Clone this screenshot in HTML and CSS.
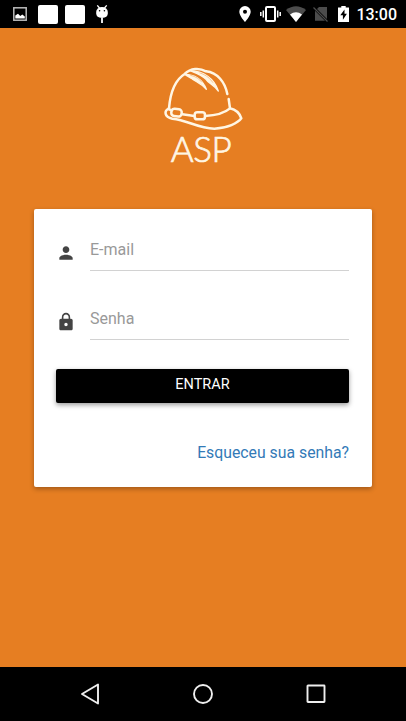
FILE: index.html
```html
<!DOCTYPE html>
<html lang="pt-BR">
<head>
<meta charset="utf-8">
<title>ASP</title>
<link rel="stylesheet" href="styles.css">
</head>

<body>
<div class="status">
   <div class="status_left">
      <svg class="ic_photo" width="14" height="14" viewBox="0 0 14 14"><rect x="0.8" y="0.8" width="12.4" height="12.4" fill="none" stroke="#bbb" stroke-width="1.5"/><path d="M2.3 11.5V8.5L5 6.8L7.3 9L9.3 7.5L11.8 9.6V11.5Z" fill="#fff"/></svg>
      <span class="blank"></span>
      <span class="blank"></span>
      <svg class="ic_droid" width="14" height="18" viewBox="0 0 14 18"><path d="M2.3 0.4L4.5 3M11.7 0.4L9.5 3" stroke="#fff" stroke-width="1.3"/><path d="M1.2 7A5.8 5 0 0 1 12.8 7V8.5Q12.8 12.6 7 13Q1.2 12.6 1.2 8.5Z" fill="#fff"/><path d="M7 13V18" stroke="#fff" stroke-width="1.8"/><circle cx="4.6" cy="5.7" r=".8"/><circle cx="9.4" cy="5.7" r=".8"/></svg>
   </div>
   <div class="status_right">
      <svg width="12" height="16" viewBox="0 0 12 16"><path fill="#fff" fill-rule="evenodd" d="M6 0A5.7 5.7 0 0 0 .3 5.7C.3 9.8 6 16 6 16S11.7 9.8 11.7 5.7A5.7 5.7 0 0 0 6 0ZM6 3.7A2 2 0 1 1 6 7.7A2 2 0 0 1 6 3.7Z"/></svg>
      <svg class="ic_vibrate" width="21" height="16" viewBox="0 0 21 16"><rect x="6" y="1" width="9" height="14" rx="1" fill="none" stroke="#fff" stroke-width="2"/><path d="M.8 6V10M3.3 4.5V11.5M17.7 4.5V11.5M20.2 6V10" stroke="#fff" stroke-width="1.5"/></svg>
      <svg class="ic_wifi" width="20" height="16" viewBox="0 0 20 16"><path fill="#4c4c4c" d="M0 4Q10 -3.5 20 4L10 16Z"/><path fill="#fff" d="M4 8.5Q10 4 16 8.5L10 16Z"/></svg>
      <svg class="ic_sim" width="16" height="16" viewBox="0 0 16 16"><path fill="#4c4c4c" d="M6 1H14V13L4 3ZM2 4.7L12 14.7H2Z"/><path d="M.5 1.5L14.5 15.5" stroke="#4c4c4c" stroke-width="1.3"/></svg>
      <svg class="ic_battery" width="11" height="16" viewBox="0 0 11 16"><path fill="#fff" d="M3.3 0H7.7V1.5H11V16H0V1.5H3.3Z"/><path d="M6.5 3.5L2.3 9.3H4.9V13.7L8.9 7.7H6.5Z"/></svg>
      <span class="clock">13:00</span>
   </div>
</div>

<div class="main">
   <div class="logo">
      <svg width="110" height="80" viewBox="0 0 330 240" fill="none" stroke="#fff6e4" stroke-width="7.5" stroke-linecap="round" stroke-linejoin="round">
         <path d="M57 160C61 112 75 75 104 57C122 39 148 38 168 49C203 53 225 82 232 117"/>
         <path d="M236 132L240 160C258 164 270 178 274 190C264 204 232 220 193 221C143 220 114 196 67 191C43 186 41 168 57 160"/>
         <path d="M57 163L65 166M97 178L133 183M165 183C198 181 225 173 240 160"/>
         <rect x="64" y="162" width="31" height="22" rx="9" transform="rotate(7 80 173)"/>
         <rect x="134" y="172" width="31" height="21" rx="8"/>
         <g stroke-width="4" fill="#fff6e4">
            <path d="M104 58C132 58 158 72 169 103C153 84 136 80 124 70Z"/>
            <path d="M120 47C160 48 193 70 205 108C190 88 176 86 168 73C156 60 138 54 120 47Z"/>
         </g>
         <path d="M122 61C138 65 148 72 155 81M150 54C170 60 181 72 188 82" stroke="#f0b071" stroke-width="2"/>
      </svg>
      <div class="logo_text">ASP</div>
   </div>

   <form class="card">
      <div class="field">
         <svg width="20" height="20" viewBox="0 0 24 24"><path fill="#444" d="M12 12c2.210 0 4-1.790 4-4s-1.790-4-4-4-4 1.790-4 4 1.790 4 4 4zm0 2c-2.670 0-8 1.340-8 4v2h16v-2c0-2.660-5.330-4-8-4z"/></svg>
         <input type="text" placeholder="E-mail">
      </div>
      <div class="field">
         <svg width="20" height="20" viewBox="0 0 24 24"><path fill="#444" d="M18 8h-1V6c0-2.760-2.240-5-5-5S7 3.240 7 6v2H6c-1.100 0-2 .9-2 2v10c0 1.100.9 2 2 2h12c1.100 0 2-.9 2-2V10c0-1.100-.9-2-2-2zm-6 9c-1.100 0-2-.9-2-2s.9-2 2-2 2 .9 2 2-.9 2-2 2zm3.100-9H8.900V6c0-1.710 1.390-3.100 3.100-3.100 1.710 0 3.100 1.390 3.100 3.100v2z"/></svg>
         <input type="password" placeholder="Senha">
      </div>
      <button type="button" class="enter">ENTRAR</button>
      <a class="forgot" href="#">Esqueceu sua senha?</a>
   </form>
</div>

<div class="navbar">
   <svg width="20" height="22" viewBox="0 0 20 22"><path d="M18 1.5V20.5L2 11Z" fill="none" stroke="#eee" stroke-width="1.9" stroke-linejoin="round"/></svg>
   <svg width="20" height="20" viewBox="0 0 20 20"><circle cx="10" cy="10" r="9" fill="none" stroke="#eee" stroke-width="1.9"/></svg>
   <svg width="20" height="20" viewBox="0 0 20 20"><rect x="1.5" y="1.5" width="17" height="16.5" rx=".5" fill="none" stroke="#eee" stroke-width="1.9"/></svg>
</div>
</body>
</html>
```

FILE: styles.css
```css
*{margin:0;padding:0;box-sizing:border-box;}
body{height:100vh;display:flex;flex-direction:column;background:#e67e22;font-family:Roboto,sans-serif;overflow:hidden;}
svg{display:block;flex:none;}

.status{height:28px;flex:none;display:flex;justify-content:space-between;align-items:center;padding:0 9px 0 13px;background:#000;color:#fff;}
.status_left,.status_right{display:flex;align-items:center;}
.blank{width:20px;height:19px;margin-left:7px;border-radius:2px;background:#fff;}
.ic_photo{margin-right:3.5px;}
.ic_droid{margin-left:10px;}
.ic_vibrate{margin-left:9px;}
.ic_wifi{margin-left:5px;}
.ic_sim{margin-left:7px;}
.ic_battery{margin-left:9px;}
.clock{margin-left:7px;font-size:16px;font-weight:500;line-height:28px;padding-top:2px;}

.main{flex:1;display:flex;flex-direction:column;}
.logo{height:181px;padding:27px 0 0 3px;display:flex;flex-direction:column;align-items:center;}
.logo_text{margin:-5px 7px 0 0;font-family:Lato,sans-serif;font-weight:300;font-size:35px;line-height:36px;letter-spacing:-.5px;color:#fff6e4;-webkit-text-stroke:.7px #fff6e4;}

.card{height:278px;margin:0 34px;padding:23px 23px 0 22px;display:flex;flex-direction:column;background:#fff;border-radius:2px;box-shadow:0 2px 5px rgba(0,0,0,.3);}
.field{height:39px;margin-bottom:30px;display:flex;align-items:center;gap:14px;}
.field svg{margin-top:3px;}
.field input{flex:1;min-width:0;height:39px;padding-bottom:3px;border:0;border-bottom:1px solid #d2d2d2;background:none;font:400 16px Roboto,sans-serif;outline:none;}
.field input::placeholder{color:#999;}
.enter{height:34px;flex:none;margin-top:-1px;border:0;border-radius:2px;padding-bottom:3px;background:#000;color:#fff;font:400 14.5px Roboto,sans-serif;box-shadow:0 2px 5px rgba(0,0,0,.4);}
.forgot{align-self:flex-end;margin-top:40px;font-size:15.8px;line-height:20px;color:#337ab7;text-decoration:none;}

.navbar{height:54px;flex:none;display:flex;justify-content:space-between;align-items:center;padding:0 80px;background:#000;}
```
